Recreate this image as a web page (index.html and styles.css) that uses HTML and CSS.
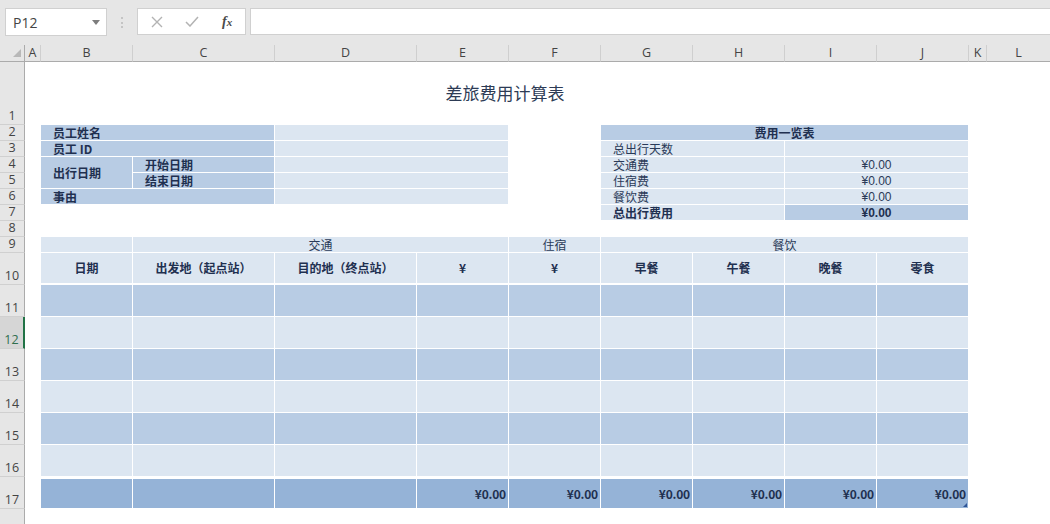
FILE: index.html
```html
<!DOCTYPE html>
<html lang="zh-CN">
<head>
<meta charset="utf-8">
<title>差旅费用计算表</title>
<link rel="stylesheet" href="styles.css">
</head>
<body>
<div class="app">
  <div class="fbar">
    <div class="namebox"><span class="ref">P12</span><svg class="dd" width="8" height="5" viewBox="0 0 8 5"><path d="M0 0H8L4 5Z" fill="#7d7d7d"/></svg></div>
    <div class="grip"></div>
    <div class="fxbox">
      <svg class="ico" width="12" height="12" viewBox="0 0 12 12"><path d="M1 1L11 11M11 1L1 11" stroke="#b3b3b3" stroke-width="1.4" fill="none"/></svg>
      <svg class="ico" width="14" height="11" viewBox="0 0 14 11"><path d="M1 6L5 10L13 1" stroke="#b3b3b3" stroke-width="1.5" fill="none"/></svg>
      <span class="fx">f<small>x</small></span>
    </div>
    <div class="finput"></div>
  </div>

  <div class="sheet">
    <div class="corner"><svg width="8" height="8" viewBox="0 0 8 8"><path d="M8 0V8H0Z" fill="#b8b8b8"/></svg></div>
    <div class="ch cA">A</div>
    <div class="ch cB">B</div>
    <div class="ch cC">C</div>
    <div class="ch cD">D</div>
    <div class="ch cE">E</div>
    <div class="ch cF">F</div>
    <div class="ch cG">G</div>
    <div class="ch cH">H</div>
    <div class="ch cI">I</div>
    <div class="ch cJ">J</div>
    <div class="ch cK">K</div>
    <div class="ch cL">L</div>

    <div class="rh r1">1</div>
    <div class="rh r2">2</div>
    <div class="rh r3">3</div>
    <div class="rh r4">4</div>
    <div class="rh r5">5</div>
    <div class="rh r6">6</div>
    <div class="rh r7">7</div>
    <div class="rh r8">8</div>
    <div class="rh r9">9</div>
    <div class="rh r10">10</div>
    <div class="rh r11">11</div>
    <div class="rh r12 sel">12</div>
    <div class="rh r13">13</div>
    <div class="rh r14">14</div>
    <div class="rh r15">15</div>
    <div class="rh r16">16</div>
    <div class="rh r17">17</div>
    <div class="rh r18"></div>

    <!-- title -->
    <div class="title r1 cBJ">差旅费用计算表</div>

    <!-- employee info -->
    <div class="cell f1 b l r2 cBC">员工姓名</div>
    <div class="cell f2 r2 cDE"></div>
    <div class="cell f1 b l r3 cBC">员工 ID</div>
    <div class="cell f2 r3 cDE"></div>
    <div class="cell f1 b l r45 cB">出行日期</div>
    <div class="cell f1 b l r4 cC">开始日期</div>
    <div class="cell f2 r4 cDE"></div>
    <div class="cell f1 b l r5 cC">结束日期</div>
    <div class="cell f2 r5 cDE"></div>
    <div class="cell f1 b l r6 cBC">事由</div>
    <div class="cell f2 r6 cDE"></div>

    <!-- summary -->
    <div class="cell f1 b c r2 cGJ">费用一览表</div>
    <div class="cell f2 l r3 cGH">总出行天数</div>
    <div class="cell f2 c r3 cIJ"></div>
    <div class="cell f2 l r4 cGH">交通费</div>
    <div class="cell f2 c num r4 cIJ">¥0.00</div>
    <div class="cell f2 l r5 cGH">住宿费</div>
    <div class="cell f2 c num r5 cIJ">¥0.00</div>
    <div class="cell f2 l r6 cGH">餐饮费</div>
    <div class="cell f2 c num r6 cIJ">¥0.00</div>
    <div class="cell f2 b l r7 cGH">总出行费用</div>
    <div class="cell f1 b c num r7 cIJ">¥0.00</div>

    <!-- main table: group header -->
    <div class="cell f2 r9 cB"></div>
    <div class="cell f2 c r9 cCE">交通</div>
    <div class="cell f2 c r9 cF">住宿</div>
    <div class="cell f2 c r9 cGJ">餐饮</div>

    <!-- column header -->
    <div class="cell f2 b c hd r10 cB">日期</div>
    <div class="cell f2 b c hd r10 cC">出发地（起点站）</div>
    <div class="cell f2 b c hd r10 cD">目的地（终点站）</div>
    <div class="cell f2 b c hd r10 cE">¥</div>
    <div class="cell f2 b c hd r10 cF">¥</div>
    <div class="cell f2 b c hd r10 cG">早餐</div>
    <div class="cell f2 b c hd r10 cH">午餐</div>
    <div class="cell f2 b c hd r10 cI">晚餐</div>
    <div class="cell f2 b c hd r10 cJ">零食</div>

    <!-- data rows -->
    <div class="cell f1 r11 cB"></div><div class="cell f1 r11 cC"></div><div class="cell f1 r11 cD"></div><div class="cell f1 r11 cE"></div><div class="cell f1 r11 cF"></div><div class="cell f1 r11 cG"></div><div class="cell f1 r11 cH"></div><div class="cell f1 r11 cI"></div><div class="cell f1 r11 cJ"></div>
    <div class="cell f2 r12 cB"></div><div class="cell f2 r12 cC"></div><div class="cell f2 r12 cD"></div><div class="cell f2 r12 cE"></div><div class="cell f2 r12 cF"></div><div class="cell f2 r12 cG"></div><div class="cell f2 r12 cH"></div><div class="cell f2 r12 cI"></div><div class="cell f2 r12 cJ"></div>
    <div class="cell f1 r13 cB"></div><div class="cell f1 r13 cC"></div><div class="cell f1 r13 cD"></div><div class="cell f1 r13 cE"></div><div class="cell f1 r13 cF"></div><div class="cell f1 r13 cG"></div><div class="cell f1 r13 cH"></div><div class="cell f1 r13 cI"></div><div class="cell f1 r13 cJ"></div>
    <div class="cell f2 r14 cB"></div><div class="cell f2 r14 cC"></div><div class="cell f2 r14 cD"></div><div class="cell f2 r14 cE"></div><div class="cell f2 r14 cF"></div><div class="cell f2 r14 cG"></div><div class="cell f2 r14 cH"></div><div class="cell f2 r14 cI"></div><div class="cell f2 r14 cJ"></div>
    <div class="cell f1 r15 cB"></div><div class="cell f1 r15 cC"></div><div class="cell f1 r15 cD"></div><div class="cell f1 r15 cE"></div><div class="cell f1 r15 cF"></div><div class="cell f1 r15 cG"></div><div class="cell f1 r15 cH"></div><div class="cell f1 r15 cI"></div><div class="cell f1 r15 cJ"></div>
    <div class="cell f2 r16 cB"></div><div class="cell f2 r16 cC"></div><div class="cell f2 r16 cD"></div><div class="cell f2 r16 cE"></div><div class="cell f2 r16 cF"></div><div class="cell f2 r16 cG"></div><div class="cell f2 r16 cH"></div><div class="cell f2 r16 cI"></div><div class="cell f2 r16 cJ"></div>

    <!-- total row -->
    <div class="cell f3 tot r17 cB"></div>
    <div class="cell f3 tot r17 cC"></div>
    <div class="cell f3 tot r17 cD"></div>
    <div class="cell f3 tot b r tnum r17 cE">¥0.00</div>
    <div class="cell f3 tot b r tnum r17 cF">¥0.00</div>
    <div class="cell f3 tot b r tnum r17 cG">¥0.00</div>
    <div class="cell f3 tot b r tnum r17 cH">¥0.00</div>
    <div class="cell f3 tot b r tnum r17 cI">¥0.00</div>
    <div class="cell f3 tot b r tnum r17 cJ">¥0.00<span class="handle"></span></div>
  </div>
</div>
</body>
</html>
```

FILE: styles.css
```css
* { box-sizing: border-box; }
html, body { margin: 0; padding: 0; }
body {
  width: 1050px;
  height: 524px;
  overflow: hidden;
  background: #ffffff;
  font-family: "Noto Sans CJK SC", "Noto Sans", sans-serif;
}
.app {
  display: flex;
  flex-direction: column;
  width: 1050px;
  height: 524px;
}

/* formula bar */
.fbar {
  height: 45px;
  background: #e6e6e6;
  display: flex;
  align-items: flex-start;
  padding-top: 8px;
  padding-left: 5px;
}
.namebox {
  width: 102px;
  height: 28px;
  background: #fff;
  border: 1px solid #d0d0d0;
  display: flex;
  align-items: center;
  justify-content: space-between;
  padding: 0 6px 0 7px;
}
.ref {
  font-family: "Open Sans", "Liberation Sans", sans-serif;
  font-size: 14px;
  color: #444;
}
.dd { margin-top: 1px; }
.grip {
  width: 0;
  height: 11px;
  margin: 9px 14px 0 14px;
  border-left: 2px dotted #c4c4c4;
}
.fxbox {
  width: 109px;
  height: 27px;
  background: #fff;
  border: 1px solid #d0d0d0;
  display: flex;
  align-items: center;
  padding-left: 13px;
  gap: 0;
}
.fxbox .ico:first-child { margin-right: 22px; }
.fxbox .ico:nth-child(2) { margin-right: 23px; }
.fx {
  font-family: "Liberation Serif", "DejaVu Serif", serif;
  font-style: italic;
  font-weight: bold;
  font-size: 14px;
  color: #4a4a4a;
  line-height: 1;
}
.fx small { font-size: 11px; }
.finput {
  flex: 1;
  height: 27px;
  margin-left: 4px;
  background: #fff;
  border: 1px solid #d0d0d0;
  border-right: none;
}

/* sheet grid */
.sheet {
  flex: 1;
  display: grid;
  grid-template-columns: 25px 16px 92px 142px 142px 92px 92px 92px 92px 92px 92px 18px 1fr;
  grid-template-rows: 17px 63px repeat(8, 16px) 32px repeat(7, 32px) 1fr;
  background: #fff;
}
.corner {
  grid-column: 1;
  grid-row: 1;
  background: #e6e6e6;
  border-right: 1px solid #ababab;
  border-bottom: 1px solid #ababab;
  display: flex;
  align-items: flex-end;
  justify-content: flex-end;
  padding: 0 3px 4px 0;
}
.ch {
  grid-row: 1;
  background: #e6e6e6;
  border-right: 1px solid #cfcfcf;
  border-bottom: 1px solid #ababab;
  font-family: "Open Sans", "Liberation Sans", sans-serif;
  font-size: 12.5px;
  color: #444;
  display: flex;
  align-items: center;
  justify-content: center;
  line-height: 1;
  padding-top: 1px;
}
.ch.cL { border-right: none; }
.rh {
  grid-column: 1;
  background: #e6e6e6;
  border-right: 1px solid #ababab;
  border-bottom: 1px solid #d0d0d0;
  font-family: "Open Sans", "Liberation Sans", sans-serif;
  font-size: 12.5px;
  color: #444;
  display: flex;
  align-items: flex-end;
  justify-content: center;
  line-height: 14px;
  padding-bottom: 1px;
}
.rh.sel {
  background: #d6d6d6;
  color: #2f6e4e;
  border-right: 2px solid #217346;
}
.rh.r18 { border-bottom: none; }

/* grid placement: columns */
.cA { grid-column: 2; }
.cB { grid-column: 3; }
.cC { grid-column: 4; }
.cD { grid-column: 5; }
.cE { grid-column: 6; }
.cF { grid-column: 7; }
.cG { grid-column: 8; }
.cH { grid-column: 9; }
.cI { grid-column: 10; }
.cJ { grid-column: 11; }
.cK { grid-column: 12; }
.cL { grid-column: 13; }
.cBC { grid-column: 3 / 5; }
.cDE { grid-column: 5 / 7; }
.cCE { grid-column: 4 / 7; }
.cGJ { grid-column: 8 / 12; }
.cGH { grid-column: 8 / 10; }
.cIJ { grid-column: 10 / 12; }
.cBJ { grid-column: 3 / 12; }

/* grid placement: rows */
.r1 { grid-row: 2; }
.r2 { grid-row: 3; }
.r3 { grid-row: 4; }
.r4 { grid-row: 5; }
.r5 { grid-row: 6; }
.r6 { grid-row: 7; }
.r7 { grid-row: 8; }
.r8 { grid-row: 9; }
.r9 { grid-row: 10; }
.r10 { grid-row: 11; }
.r11 { grid-row: 12; }
.r12 { grid-row: 13; }
.r13 { grid-row: 14; }
.r14 { grid-row: 15; }
.r15 { grid-row: 16; }
.r16 { grid-row: 17; }
.r17 { grid-row: 18; }
.r18 { grid-row: 19; }
.r45 { grid-row: 5 / 7; }

/* title */
.title {
  display: flex;
  align-items: center;
  justify-content: center;
  font-size: 17px;
  color: #2d3b55;
  padding-bottom: 2px;
}

/* cells */
.cell {
  border-right: 1px solid #fff;
  border-bottom: 1px solid #fff;
  display: flex;
  align-items: center;
  font-size: 12px;
  line-height: 1;
  color: #2a3a58;
  white-space: nowrap;
  position: relative;
}
.f1 { background: #b8cce4; }
.f2 { background: #dce6f1; }
.f3 { background: #95b3d7; }
.b { font-weight: bold; color: #1f3050; }
.l { padding-left: 12px; }
.c { justify-content: center; }
.r { justify-content: flex-end; padding-right: 2px; }
.num { font-family: "Liberation Sans", "Noto Sans CJK SC", sans-serif; }
.tnum { font-family: "Noto Sans CJK SC", "Noto Sans", sans-serif; letter-spacing: -0.2px; }
.hd { border-bottom: 2px solid #fff; }
.tot { border-top: 2px solid #fff; }
.handle {
  position: absolute;
  right: 1px;
  bottom: 1px;
  width: 0;
  height: 0;
  border-left: 4px solid transparent;
  border-bottom: 4px solid #2f5597;
}
```
